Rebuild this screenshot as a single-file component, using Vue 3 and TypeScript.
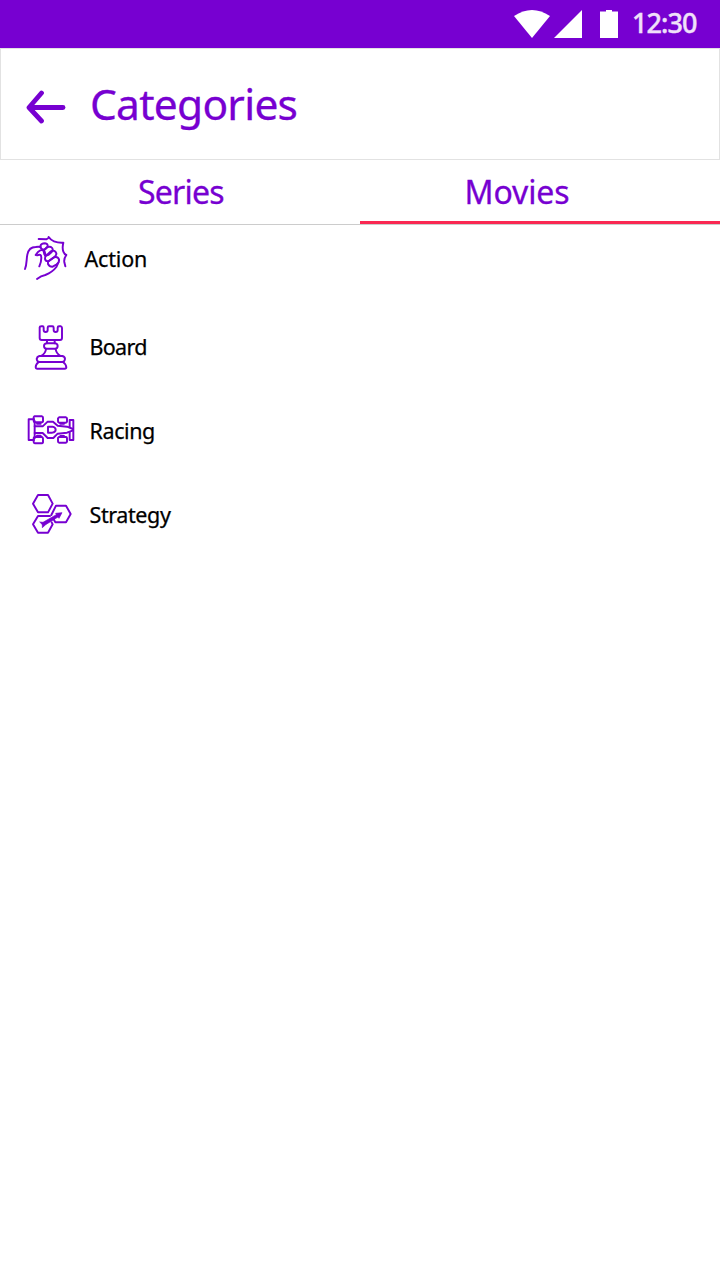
<script setup lang="ts">
interface Tab {
  id: string
  label: string
}

interface Category {
  id: string
  label: string
  viewBox: string
  paths: string[]
}

const tabs: Tab[] = [
  { id: 'series', label: 'Series' },
  { id: 'movies', label: 'Movies' },
]
const activeTab = 'movies'

const categories: Category[] = [
  {
    id: 'action',
    label: 'Action',
    viewBox: '15 0 180 180',
    paths: [
      'M30 123C36 108 34 94 37 80C40 65 49 57 62 57Q70 56 77 57',
      'M66 82Q79 76 79 89Q79 102 73 115',
      'M62 81Q76 58 89 71L92 81',
      'M76 55Q78 46 90 46Q99 47 98 55Q94 64 84 65Q76 62 76 55Z',
      'M86 70Q94 53 108 57Q117 62 110 72L100 81Q90 86 88 79Z',
      'M91 85L107 70Q120 64 124 76Q125 82 117 88L101 99Q92 101 90 93Z',
      'M99 101L117 88Q128 84 132 94Q134 103 124 110L113 116Q104 117 99 108Z',
      'M66 153Q78 143 91 141Q113 132 124 117L130 104',
      'M71 33L94 34Q102 31 101 27Q108 37 117 40Q130 45 145 44Q141 60 145 71Q148 79 154 81Q146 92 148 103L151 115',
    ],
  },
  {
    id: 'board',
    label: 'Board',
    viewBox: '-15 -6 180 180',
    paths: [
      'M44 28Q44 25 49 25H53Q56 25 56 29V36Q56 42 62 42Q68 42 68 36V29Q68 25 72 25H82Q86 25 86 29V36Q86 42 92 42Q98 42 98 36V29Q98 25 102 25H108Q111 26 111 30V60Q111 66 105 66H50Q44 66 44 60Z',
      'M66 67V76M89 67V76',
      'M65 76H90Q98 77 98 84Q98 92 90 92H65Q57 92 57 84Q57 77 65 76Z',
      'M63 93Q62 106 48 114M92 93Q93 106 107 114',
      'M43 114H112Q120 116 120 123Q119 131 112 132H43Q36 131 35 123Q36 116 43 114Z',
      'M41 132Q32 139 32 148Q32 152 36 152H119Q124 152 124 148Q123 138 114 132',
    ],
  },
  {
    id: 'racing',
    label: 'Racing',
    viewBox: '0 -15 180 180',
    paths: [
      'M42 43H26V105H42',
      'M43 34H66Q69 35 69 38V49Q68 52 65 52H45Q41 51 41 48V37Z',
      'M43 96H66Q69 98 69 101V112Q68 115 65 115H45Q41 114 41 111V99Z',
      'M117 37H138Q141 38 141 41V50Q140 53 137 53H117Q114 52 114 49V40Z',
      'M117 96H138Q141 97 141 100V110Q140 113 137 113H117Q114 112 114 109V99Z',
      'M44 48V100M51 56H62M51 92H62',
      'M44 64H68L83 50H99L113 62L141 65L159 72V76L141 83L113 86L100 99H83L68 84H44',
      'M121 56H132M121 93H132',
      'M84 65H97Q107 67 107 74Q107 81 97 83H84Z',
      'M149 67V45H160V105H149V82',
    ],
  },
  {
    id: 'strategy',
    label: 'Strategy',
    viewBox: '-6 -6 180 180',
    paths: [
      'M48 27H78L92 53L78 79H48L33 53Z',
      'M88 87L102 59H132L146 84L132 109H100L95 100',
      'M84 90H48L33 115L48 140H78L92 115L89 109',
    ],
  },
]
</script>

<template>
  <main class="screen">
    <header class="status">
      <svg class="signals" viewBox="0 0 106 30" aria-hidden="true">
        <path d="M0 6Q18-6 36 6L18 28Z" />
        <path d="M68 0V28H40Z" />
        <path d="M86 1.5H92V0H98V1.5H104V28H86Z" />
      </svg>
      <span class="clock">12:30</span>
    </header>
    <div class="appbar">
      <svg class="back" viewBox="0 0 40 36" aria-hidden="true">
        <path class="head" d="M15.5 4L3 18.5L15.5 32" />
        <path class="shaft" d="M4 18.5H37" />
      </svg>
      <h1>Categories</h1>
    </div>
    <nav class="tabs">
      <button
        v-for="tab in tabs"
        :key="tab.id"
        class="tab"
        :class="[tab.id, { active: tab.id === activeTab }]"
      >
        <span>{{ tab.label }}</span>
      </button>
    </nav>
    <ul class="list">
      <li v-for="item in categories" :key="item.id" class="row" :class="item.id">
        <svg class="icon" :viewBox="item.viewBox" aria-hidden="true">
          <path v-for="d in item.paths" :key="d" :d="d" />
          <path
            v-if="item.id === 'strategy'"
            class="arrow"
            d="M54 108L63 109L103 86L101 82L120 80L111 97L108 93L71 116L61 125L61 117Z"
          />
        </svg>
        <span class="label">{{ item.label }}</span>
      </li>
    </ul>
  </main>
</template>

<style>
body {
  margin: 0;
  background: #fff;
}
</style>

<style scoped>
.screen {
  width: 720px;
  height: 1280px;
  overflow: hidden;
  background: #fff;
  color: #7700d1;
  font-family: 'Noto Sans', 'Open Sans', sans-serif;
}
.status {
  box-sizing: border-box;
  height: 48px;
  padding-right: 23px;
  display: flex;
  justify-content: flex-end;
  background: #7700d1;
}
.signals {
  width: 106px;
  height: 30px;
  margin-top: 10px;
  fill: #fff;
}
.clock {
  width: 65px;
  margin-left: 12px;
  font-size: 27px;
  font-weight: 500;
  line-height: 46px;
  letter-spacing: -0.95px;
  white-space: nowrap;
  color: #f0e0fa;
  -webkit-text-stroke: 0.4px #f0e0fa;
}
.appbar {
  box-sizing: border-box;
  height: 112px;
  padding-left: 25px;
  display: flex;
  align-items: flex-start;
  border: 1px solid #e2e2e2;
}
.back {
  width: 40px;
  height: 36px;
  margin-top: 40px;
  fill: none;
  stroke: #7700d1;
  stroke-width: 4.8;
  stroke-linecap: round;
  stroke-linejoin: round;
}
h1 {
  margin: 25px 0 0 24px;
  font-size: 42.5px;
  font-weight: 400;
  line-height: 60px;
  letter-spacing: -0.75px;
  -webkit-text-stroke: 0.3px #7700d1;
}
.tabs {
  box-sizing: border-box;
  height: 65px;
  display: flex;
  border-bottom: 1px solid #ccc;
}
.tab {
  box-sizing: border-box;
  width: 360px;
  height: 64px;
  padding: 0;
  display: flex;
  align-items: flex-start;
  border: 0;
  background: none;
  color: inherit;
  font: 400 32px / 60px 'Noto Sans', 'Open Sans', sans-serif;
  -webkit-text-stroke: 0.3px #7700d1;
}
.tab span {
  margin-top: 2px;
  height: 58px;
}
.series {
  padding-left: 138px;
  letter-spacing: -0.8px;
}
.movies {
  padding-left: 104.5px;
  letter-spacing: -0.1px;
}
.tab.active {
  border-bottom: 3px solid #fa2852;
}
.list {
  margin: 0;
  padding: 3px 0 0 20px;
  display: flex;
  flex-direction: column;
  gap: 24px;
  list-style: none;
}
.row {
  height: 60px;
  display: flex;
  align-items: center;
}
.board {
  margin-top: 4px;
}
.icon {
  width: 60px;
  height: 60px;
  fill: none;
  stroke: #7700d1;
  stroke-width: 5.8;
  stroke-linecap: round;
  stroke-linejoin: round;
}
.icon .arrow {
  fill: #7700d1;
  stroke-width: 2;
}
.label {
  margin: 2px 0 0 9.5px;
  font-size: 21.5px;
  line-height: 30px;
  letter-spacing: -0.4px;
  color: #000;
  -webkit-text-stroke: 0.25px #000;
}
.action .label {
  margin-left: 4.5px;
  letter-spacing: -0.15px;
}
.board .label {
  letter-spacing: -0.7px;
}
</style>
